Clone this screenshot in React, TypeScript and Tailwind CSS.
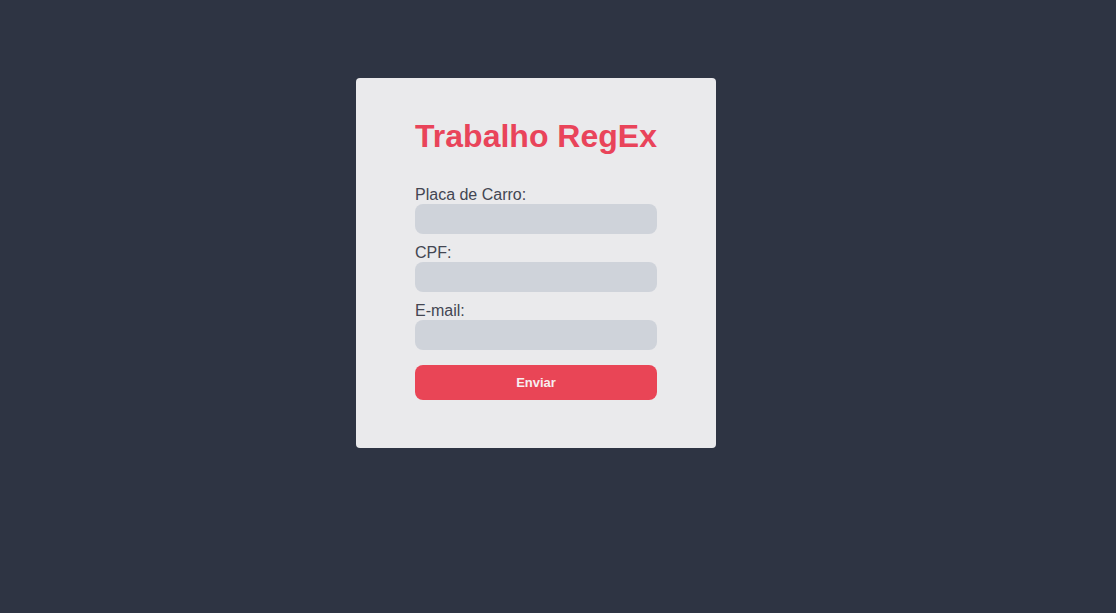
export default function App() {
  return (
    <div
      className="min-h-[613px] w-full bg-[#2e3443] flex justify-center items-start pt-[78px] pr-[44px]"
      style={{ fontFamily: '"Liberation Sans", Arial, sans-serif' }}
    >
      <div className="w-[360px] h-[370px] bg-[#eaeaec] rounded-[4px] px-[59px] flex flex-col">
        <h1 className="mt-[40px] text-[32px] leading-[37px] font-bold text-[#e9445a] text-center">
          Trabalho RegEx
        </h1>
        <form className="mt-[30px] flex flex-col" onSubmit={(e) => e.preventDefault()}>
          <label className="text-[16px] leading-[19px] text-[#434652]">Placa de Carro:</label>
          <input className="h-[30px] w-full rounded-[8px] bg-[#cfd3da] outline-none" />
          <label className="mt-[9px] text-[16px] leading-[19px] text-[#434652]">CPF:</label>
          <input className="h-[30px] w-full rounded-[8px] bg-[#cfd3da] outline-none" />
          <label className="mt-[9px] text-[16px] leading-[19px] text-[#434652]">E-mail:</label>
          <input className="h-[30px] w-full rounded-[8px] bg-[#cfd3da] outline-none" />
          <button
            type="submit"
            className="mt-[15px] h-[35px] w-full rounded-[8px] bg-[#e94556] text-[13px] font-bold text-[#f7eef0]"
          >
            Enviar
          </button>
        </form>
      </div>
    </div>
  );
}
